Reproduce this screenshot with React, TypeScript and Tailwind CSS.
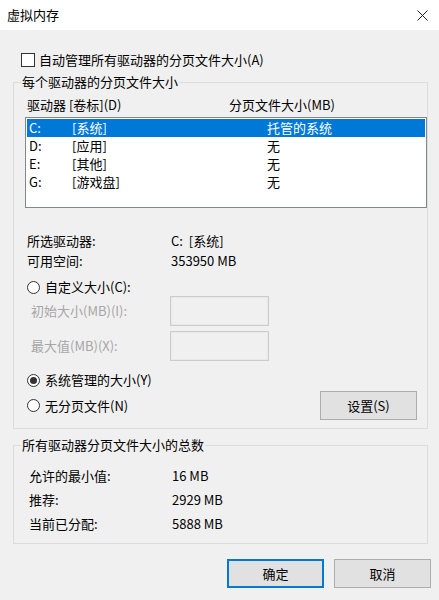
import React from "react";

const font = { fontFamily: '"Noto Sans CJK SC", "Noto Sans", sans-serif' };

function Radio({ checked }: { checked?: boolean }) {
  return (
    <span className="w-[13px] h-[13px] rounded-full border border-[#333333] bg-white flex items-center justify-center shrink-0">
      {checked && <span className="w-[7px] h-[7px] rounded-full bg-[#333333]" />}
    </span>
  );
}

function Btn({ children, primary, className }: { children: React.ReactNode; primary?: boolean; className?: string }) {
  return (
    <div
      className={
        "w-[97px] h-[29px] flex items-center justify-center text-[13px] text-black bg-[#e1e1e1] " +
        (primary ? "border-2 border-[#0078d7] " : "border border-[#adadad] ") +
        (className ?? "")
      }
    >
      {children}
    </div>
  );
}

export default function App() {
  const rows = [
    { d: "C:", l: "[系统]", s: "托管的系统", sel: true },
    { d: "D:", l: "[应用]", s: "无" },
    { d: "E:", l: "[其他]", s: "无" },
    { d: "G:", l: "[游戏盘]", s: "无" },
  ];
  return (
    <div style={font} className="w-[439px] h-[600px] bg-[#f0f0f0] text-[13px] text-black leading-[18px] overflow-hidden flex flex-col">
      {/* title bar */}
      <div className="h-[30px] bg-white flex items-center justify-between pl-[7px] pr-[11px] shrink-0">
        <span className="text-[13px]">虚拟内存</span>
        <svg width="11" height="11" viewBox="0 0 11 11" className="mr-[0px]">
          <path d="M0.5 0.5 L10.5 10.5 M10.5 0.5 L0.5 10.5" stroke="#222" strokeWidth="1" />
        </svg>
      </div>

      <div className="pl-[13px] pr-[11px] flex flex-col">
        {/* checkbox */}
        <div className="mt-[22px] h-[16px] flex items-center pl-[8px] gap-[4px]">
          <span className="w-[14px] h-[14px] border border-[#333333] bg-white shrink-0" />
          <span>自动管理所有驱动器的分页文件大小(A)</span>
        </div>

        {/* group 1 */}
        <div className="relative mt-[14px] w-[415px] h-[347px] border border-[#dcdcdc] flex flex-col">
          <span className="absolute left-[7px] top-[-10px] px-[1px] bg-[#f0f0f0] leading-[18px]">每个驱动器的分页文件大小</span>

          <div className="mt-[13px] h-[18px] flex items-center">
            <span className="ml-[13px] w-[202px]">驱动器 [卷标](D)</span>
            <span>分页文件大小(MB)</span>
          </div>

          <div className="mt-[3px] ml-[11px] w-[402px] h-[91px] border border-[#828790] bg-white p-[1px] flex flex-col">
            {rows.map((r) => (
              <div
                key={r.d}
                className={
                  "h-[18px] shrink-0 flex items-center pl-[2px] " +
                  (r.sel ? "bg-[#0078d7] text-white" : "text-black")
                }
              >
                <span className="w-[43px]">{r.d}</span>
                <span className="w-[195px]">{r.l}</span>
                <span>{r.s}</span>
              </div>
            ))}
          </div>

          <div className="mt-[24px] h-[18px] flex items-center">
            <span className="ml-[13px] w-[144px]">所选驱动器:</span>
            <span>C:&nbsp;&nbsp;[系统]</span>
          </div>
          <div className="mt-[2px] h-[18px] flex items-center">
            <span className="ml-[13px] w-[144px]">可用空间:</span>
            <span>353950 MB</span>
          </div>

          <div className="mt-[8px] h-[18px] flex items-center ml-[13px] gap-[5px]">
            <Radio />
            <span>自定义大小(C):</span>
          </div>

          <div className="h-[30px] flex items-center">
            <span className="ml-[17px] w-[139px] text-[#a6a6a6]">初始大小(MB)(I):</span>
            <span className="w-[99px] h-[30px] border border-[#cccccc] shadow-[inset_0_0_0_1px_#e8e8e8] bg-[#f0f0f0]" />
          </div>
          <div className="mt-[5px] h-[30px] flex items-center">
            <span className="ml-[17px] w-[139px] text-[#a6a6a6]">最大值(MB)(X):</span>
            <span className="w-[99px] h-[30px] border border-[#cccccc] shadow-[inset_0_0_0_1px_#e8e8e8] bg-[#f0f0f0]" />
          </div>

          <div className="mt-[10px] h-[18px] flex items-center ml-[13px] gap-[5px]">
            <Radio checked />
            <span>系统管理的大小(Y)</span>
          </div>

          <div className="mt-[2px] h-[29px] flex items-center justify-between ml-[13px] mr-[10px]">
            <div className="flex items-center gap-[5px]">
              <Radio />
              <span>无分页文件(N)</span>
            </div>
            <Btn>设置(S)</Btn>
          </div>
        </div>

        {/* group 2 */}
        <div className="relative mt-[16px] w-[415px] h-[99px] border border-[#dcdcdc] flex flex-col">
          <span className="absolute left-[7px] top-[-10px] px-[1px] bg-[#f0f0f0] leading-[18px]">所有驱动器分页文件大小的总数</span>
          <div className="mt-[21px] h-[18px] flex items-center">
            <span className="ml-[15px] w-[143px]">允许的最小值:</span>
            <span>16 MB</span>
          </div>
          <div className="mt-[6px] h-[18px] flex items-center">
            <span className="ml-[15px] w-[143px]">推荐:</span>
            <span>2929 MB</span>
          </div>
          <div className="mt-[6px] h-[18px] flex items-center">
            <span className="ml-[15px] w-[143px]">当前已分配:</span>
            <span>5888 MB</span>
          </div>
        </div>

        {/* buttons */}
        <div className="mt-[15px] flex justify-end gap-[10px] pr-[-3px] mr-[-3px]">
          <Btn primary>确定</Btn>
          <Btn>取消</Btn>
        </div>
      </div>
    </div>
  );
}
